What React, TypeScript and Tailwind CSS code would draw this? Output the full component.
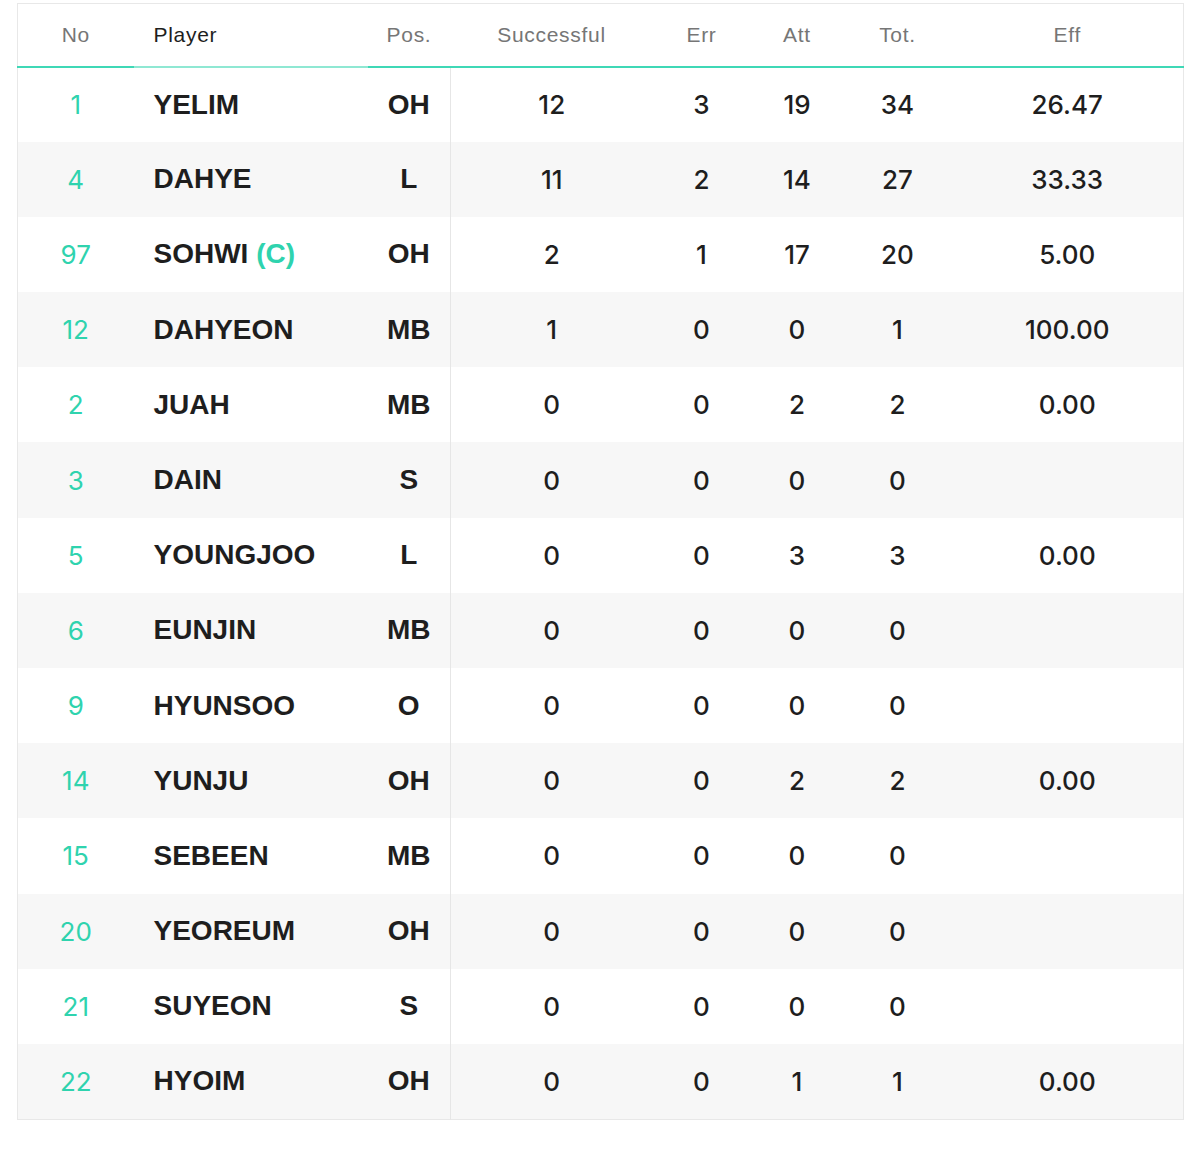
const rows = [
  { no: '1', name: 'YELIM', pos: 'OH', s: '12', e: '3', a: '19', t: '34', eff: '26.47' },
  { no: '4', name: 'DAHYE', pos: 'L', s: '11', e: '2', a: '14', t: '27', eff: '33.33' },
  { no: '97', name: 'SOHWI', captain: true, pos: 'OH', s: '2', e: '1', a: '17', t: '20', eff: '5.00' },
  { no: '12', name: 'DAHYEON', pos: 'MB', s: '1', e: '0', a: '0', t: '1', eff: '100.00' },
  { no: '2', name: 'JUAH', pos: 'MB', s: '0', e: '0', a: '2', t: '2', eff: '0.00' },
  { no: '3', name: 'DAIN', pos: 'S', s: '0', e: '0', a: '0', t: '0', eff: '' },
  { no: '5', name: 'YOUNGJOO', pos: 'L', s: '0', e: '0', a: '3', t: '3', eff: '0.00' },
  { no: '6', name: 'EUNJIN', pos: 'MB', s: '0', e: '0', a: '0', t: '0', eff: '' },
  { no: '9', name: 'HYUNSOO', pos: 'O', s: '0', e: '0', a: '0', t: '0', eff: '' },
  { no: '14', name: 'YUNJU', pos: 'OH', s: '0', e: '0', a: '2', t: '2', eff: '0.00' },
  { no: '15', name: 'SEBEEN', pos: 'MB', s: '0', e: '0', a: '0', t: '0', eff: '' },
  { no: '20', name: 'YEOREUM', pos: 'OH', s: '0', e: '0', a: '0', t: '0', eff: '' },
  { no: '21', name: 'SUYEON', pos: 'S', s: '0', e: '0', a: '0', t: '0', eff: '' },
  { no: '22', name: 'HYOIM', pos: 'OH', s: '0', e: '0', a: '1', t: '1', eff: '0.00' },
]

const head = "font-['Liberation_Sans',Arial,sans-serif] text-[21px] font-normal tracking-[0.7px] text-[#767676] border-b-2 border-[#3fd8b6] align-middle"
const num = "font-['Inter',sans-serif] text-[26px] font-medium text-[#1e1e1e] text-center align-middle"
const bold = "font-['Liberation_Sans',Arial,sans-serif] text-[28px] font-bold text-[#1e1e1e] align-middle"

export default function App() {
  return (
    <div className="min-h-screen bg-white px-[17px] pt-[3px]">
      <table className="w-[1166px] table-fixed border-collapse border border-[#e8e8e8]">
        <colgroup>
          <col className="w-[116px]" />
          <col className="w-[234px]" />
          <col className="w-[83px]" />
          <col className="w-[202px]" />
          <col className="w-[98px]" />
          <col className="w-[93px]" />
          <col className="w-[108px]" />
          <col className="w-[232px]" />
        </colgroup>
        <thead>
          <tr className="h-[63px]">
            <th className={`${head} text-center`}>No</th>
            <th className={`${head} text-left pl-[20px] !text-[#1e1e1e] !border-[#8fe8d3]`}>Player</th>
            <th className={`${head} text-center`}>Pos.</th>
            <th className={`${head} text-center`}>Successful</th>
            <th className={`${head} text-center`}>Err</th>
            <th className={`${head} text-center`}>Att</th>
            <th className={`${head} text-center`}>Tot.</th>
            <th className={`${head} text-center`}>Eff</th>
          </tr>
        </thead>
        <tbody>
          {rows.map((r, i) => (
            <tr key={r.no} className={`h-[75.2px] ${i % 2 === 1 ? 'bg-[#f7f7f7]' : 'bg-white'}`}>
              <td className={`${num} !text-[#2fd3ae] font-normal`}>{r.no}</td>
              <td className={`${bold} text-left pl-[20px]`}>
                {r.name}
                {r.captain ? <span className="text-[#2fd3ae]"> (C)</span> : null}
              </td>
              <td className={`${bold} text-center border-r border-[#e6e6e6]`}>{r.pos}</td>
              <td className={num}>{r.s}</td>
              <td className={num}>{r.e}</td>
              <td className={num}>{r.a}</td>
              <td className={num}>{r.t}</td>
              <td className={num}>{r.eff}</td>
            </tr>
          ))}
        </tbody>
      </table>
    </div>
  )
}
